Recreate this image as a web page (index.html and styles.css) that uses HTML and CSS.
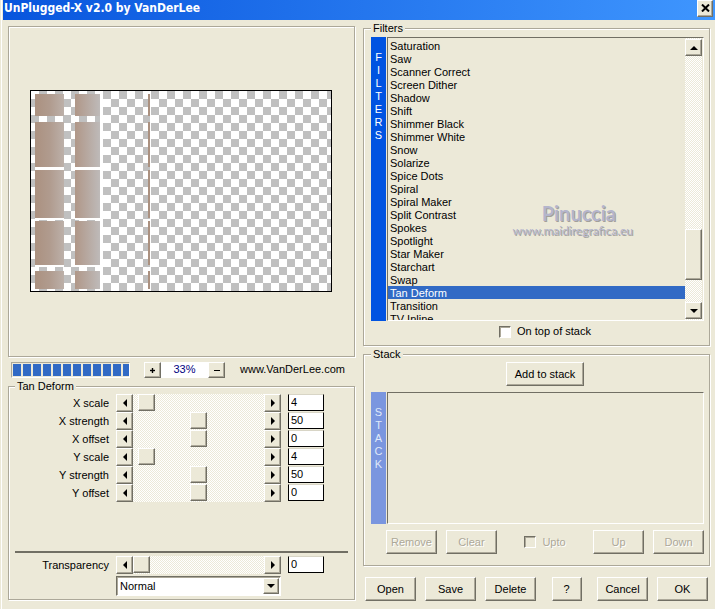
FILE: index.html
```html
<!DOCTYPE html>
<html lang="en">
<head>
  <meta charset="UTF-8">
  <title>UnPlugged-X v2.0 by VanDerLee</title>
  <link rel="stylesheet" href="styles.css">
</head>
<body>

<header class="titlebar">
  <h1>UnPlugged-X v2.0 by VanDerLee</h1>
  <button class="btn close" aria-label="Close">
    <svg width="9" height="8" viewBox="0 0 9 8"><path d="M1 0.5 L8 7.5 M8 0.5 L1 7.5" stroke="#000" stroke-width="2"/></svg>
  </button>
</header>

<main>
  <div class="col">
    <section class="panel preview">
      <svg class="canvas" width="302" height="202" viewBox="-1 -1 302 202" role="img" aria-label="Preview">
        <defs>
          <pattern id="checker" width="16" height="16" patternUnits="userSpaceOnUse">
            <rect width="16" height="16" fill="#fff"/>
            <path d="M8 0h8v8h-8z M0 8h8v8h-8z" fill="#c0c0c0"/>
          </pattern>
          <linearGradient id="dark"><stop offset="0" stop-color="#ab9180"/><stop offset="0.5" stop-color="#b09b8e"/><stop offset="1" stop-color="#bcb0a9"/></linearGradient>
          <linearGradient id="light"><stop offset="0" stop-color="#b09788"/><stop offset="1" stop-color="#bebab9"/></linearGradient>
        </defs>
        <rect width="300" height="200" fill="url(#checker)"/>
        <path d="M69 3h3v195h-3z M119 3h1v195h-1z M4 76h29v3h-29z M44 76h25v3h-25z M4 127h29v2h-29z M44 127h25v2h-25z M4 174h29v2h-29z M44 174h25v2h-25z" fill="#fff"/>
        <path d="M4 3h29v22H4z M4 31h29v45H4z M4 79h29v48H4z M4 130h29v44H4z M4 180h29v18H4z" fill="url(#dark)"/>
        <path d="M44 3h25v22H44z M44 31h25v45H44z M44 79h25v48H44z M44 130h25v44H44z M44 180h25v18H44z" fill="url(#light)"/>
        <path d="M117 3h2v22h-2z M117 31h2v45h-2z M117 79h2v48h-2z M117 130h2v44h-2z M117 180h2v18h-2z" fill="#ab9180"/>
        <rect x="-0.5" y="-0.5" width="301" height="201" fill="none" stroke="#000"/>
      </svg>
    </section>

    <div class="toolbar">
      <div class="progress" role="progressbar" aria-label="Rendering" aria-valuenow="100"></div>
      <div class="zoom">
        <button class="btn small" aria-label="Zoom in"><svg width="5" height="5"><path d="M0 2h5v1h-5z M2 0h1v5h-1z" stroke="#000" stroke-width="0.4"/></svg></button>
        <output>33%</output>
        <button class="btn small" aria-label="Zoom out"><svg width="6" height="5"><path d="M0 2h6v1h-6z"/></svg></button>
      </div>
      <a href="#">www.VanDerLee.com</a>
    </div>

    <fieldset class="group params">
      <legend>Tan Deform</legend>
      <div class="row">
        <label for="xscale">X scale</label>
        <div class="scroller">
          <button class="btn small" aria-label="Less"><i class="arrow left"></i></button>
          <input type="range" min="0" max="100" value="4" aria-label="X scale">
          <button class="btn small" aria-label="More"><i class="arrow right"></i></button>
        </div>
        <input type="text" id="xscale" value="4">
      </div>
      <div class="row">
        <label for="xstrength">X strength</label>
        <div class="scroller">
          <button class="btn small" aria-label="Less"><i class="arrow left"></i></button>
          <input type="range" min="0" max="100" value="50" aria-label="X strength">
          <button class="btn small" aria-label="More"><i class="arrow right"></i></button>
        </div>
        <input type="text" id="xstrength" value="50">
      </div>
      <div class="row">
        <label for="xoffset">X offset</label>
        <div class="scroller">
          <button class="btn small" aria-label="Less"><i class="arrow left"></i></button>
          <input type="range" min="-100" max="100" value="0" aria-label="X offset">
          <button class="btn small" aria-label="More"><i class="arrow right"></i></button>
        </div>
        <input type="text" id="xoffset" value="0">
      </div>
      <div class="row">
        <label for="yscale">Y scale</label>
        <div class="scroller">
          <button class="btn small" aria-label="Less"><i class="arrow left"></i></button>
          <input type="range" min="0" max="100" value="4" aria-label="Y scale">
          <button class="btn small" aria-label="More"><i class="arrow right"></i></button>
        </div>
        <input type="text" id="yscale" value="4">
      </div>
      <div class="row">
        <label for="ystrength">Y strength</label>
        <div class="scroller">
          <button class="btn small" aria-label="Less"><i class="arrow left"></i></button>
          <input type="range" min="0" max="100" value="50" aria-label="Y strength">
          <button class="btn small" aria-label="More"><i class="arrow right"></i></button>
        </div>
        <input type="text" id="ystrength" value="50">
      </div>
      <div class="row">
        <label for="yoffset">Y offset</label>
        <div class="scroller">
          <button class="btn small" aria-label="Less"><i class="arrow left"></i></button>
          <input type="range" min="-100" max="100" value="0" aria-label="Y offset">
          <button class="btn small" aria-label="More"><i class="arrow right"></i></button>
        </div>
        <input type="text" id="yoffset" value="0">
      </div>
      <hr>
      <div class="row">
        <label for="transparency">Transparency</label>
        <div class="scroller">
          <button class="btn small" aria-label="Less"><i class="arrow left"></i></button>
          <input type="range" min="0" max="100" value="0" aria-label="Transparency">
          <button class="btn small" aria-label="More"><i class="arrow right"></i></button>
        </div>
        <input type="text" id="transparency" value="0">
      </div>
      <div class="row">
        <div class="combo">
          <select aria-label="Blend mode">
            <option>Normal</option>
          </select>
          <span class="btn drop"><i class="arrow down"></i></span>
        </div>
      </div>
    </fieldset>
  </div>

  <div class="col">
    <fieldset class="group filters">
      <legend>Filters</legend>
      <div class="listrow">
        <div class="vbar"><span>F</span><span>I</span><span>L</span><span>T</span><span>E</span><span>R</span><span>S</span></div>
        <div class="listbox">
          <ul role="listbox" aria-label="Filters">
            <li role="option">Saturation</li>
            <li role="option">Saw</li>
            <li role="option">Scanner Correct</li>
            <li role="option">Screen Dither</li>
            <li role="option">Shadow</li>
            <li role="option">Shift</li>
            <li role="option">Shimmer Black</li>
            <li role="option">Shimmer White</li>
            <li role="option">Snow</li>
            <li role="option">Solarize</li>
            <li role="option">Spice Dots</li>
            <li role="option">Spiral</li>
            <li role="option">Spiral Maker</li>
            <li role="option">Split Contrast</li>
            <li role="option">Spokes</li>
            <li role="option">Spotlight</li>
            <li role="option">Star Maker</li>
            <li role="option">Starchart</li>
            <li role="option">Swap</li>
            <li role="option" aria-selected="true" class="selected">Tan Deform</li>
            <li role="option">Transition</li>
            <li role="option">TV Inline</li>
          </ul>
          <div class="scrollbar">
            <button class="btn" aria-label="Scroll up"><i class="arrow up"></i></button>
            <div class="thumb btn"></div>
            <button class="btn" aria-label="Scroll down"><i class="arrow down"></i></button>
          </div>
          <div class="watermark">
            <b>Pinuccia</b>
            <span>www.maidiregrafica.eu</span>
          </div>
        </div>
      </div>
      <label class="check"><input type="checkbox">On top of stack</label>
    </fieldset>

    <fieldset class="group stack">
      <legend>Stack</legend>
      <div class="addrow">
        <button class="btn add">Add to stack</button>
      </div>
      <div class="listrow">
        <div class="vbar"><span>S</span><span>T</span><span>A</span><span>C</span><span>K</span></div>
        <div class="listbox"><ul role="listbox" aria-label="Stack"></ul></div>
      </div>
      <div class="actions">
        <div class="buttons">
          <button class="btn" disabled>Remove</button>
          <button class="btn" disabled>Clear</button>
        </div>
        <label class="check disabled"><input type="checkbox" disabled>Upto</label>
        <div class="buttons">
          <button class="btn" disabled>Up</button>
          <button class="btn" disabled>Down</button>
        </div>
      </div>
    </fieldset>

    <footer class="actions">
      <div class="buttons">
        <button class="btn">Open</button>
        <button class="btn">Save</button>
        <button class="btn">Delete</button>
      </div>
      <button class="btn help">?</button>
      <div class="buttons">
        <button class="btn">Cancel</button>
        <button class="btn">OK</button>
      </div>
    </footer>
  </div>
</main>

</body>
</html>
```

FILE: styles.css
```css
* {
  box-sizing: border-box;
}
body {
  margin: 0;
  min-height: 100vh;
  background: #ece9d8;
  box-shadow: inset 1px 0 0 #ece9d8, inset 2px 0 0 #fff;
  color: #000;
  font: 11px/13px "Liberation Sans", Arial, sans-serif;
}
button, input, select {
  font: inherit;
  color: inherit;
  margin: 0;
  padding: 0;
  border-radius: 0;
}

/* title bar */
.titlebar {
  display: flex;
  align-items: flex-start;
  justify-content: space-between;
  height: 20px;
  margin-left: 3px;
  padding: 0 2px 0 1px;
  background: linear-gradient(90deg, #0855dd, #3f96fe);
}
.titlebar h1 {
  margin: 0;
  color: #fff;
  font: bold 12px/16px "DejaVu Sans Condensed", Tahoma, sans-serif;
}
.btn {
  display: flex;
  align-items: center;
  justify-content: center;
  background: #ece9d8;
  border: 1px solid;
  border-color: #fff #716f64 #716f64 #fff;
  box-shadow: inset -1px -1px 0 #aca899;
}
.btn.close {
  width: 16px;
  height: 17px;
  padding-bottom: 2px;
}
.btn.small {
  width: 17px;
  height: 100%;
  flex: none;
}

/* arrows */
.arrow {
  border: 4px solid transparent;
}
.arrow.left {
  border-left-width: 0;
  border-right-color: #000;
}
.arrow.right {
  border-right-width: 0;
  border-left-color: #000;
}
.arrow.up {
  border-top-width: 0;
  border-bottom-color: #000;
}
.arrow.down {
  border-bottom-width: 0;
  border-top-color: #000;
}

main {
  display: grid;
  grid-template-columns: 1fr 1fr;
  gap: 8px;
  padding: 2px 5px 6px 8px;
}

/* etched frames */
.panel, .group {
  min-width: 0;
  margin: 0;
  border: 1px solid #aca899;
  box-shadow: 1px 1px 0 #fff, inset 1px 1px 0 #fff;
}
legend {
  padding: 0 2px;
  background: #ece9d8;
}
.preview {
  height: 331px;
  margin-top: 4px;
  padding: 63px 21px;
}
.canvas {
  display: block;
}

.toolbar {
  display: flex;
  height: 16px;
  margin: 5px 0 2px 3px;
}
.toolbar a {
  color: #000;
  text-decoration: none;
  line-height: 15px;
}
.progress {
  width: 119px;
  margin-right: 14px;
  border: 1px solid;
  border-color: #aca899 #fff #fff #aca899;
  padding: 1px 0 1px 1px;
  background: repeating-linear-gradient(90deg, #316ac5 0 8px, #ece9d8 8px 10px) content-box;
}
.zoom {
  display: flex;
  width: 81px;
  margin-right: 15px;
}
.zoom output {
  flex: 1;
  background: #fff;
  color: #000080;
  text-align: center;
  line-height: 15px;
}

/* parameters */
.params {
  padding: 1px 6px 7px;
}
.row {
  display: grid;
  grid-template-columns: 94px 165px 36px;
  column-gap: 7px;
  height: 17px;
  margin-bottom: 1px;
}
.row label {
  text-align: right;
  line-height: 18px;
}
.scroller, .scrollbar {
  display: flex;
  background: conic-gradient(#fff 25%, #ece9d8 0 50%, #fff 0 75%, #ece9d8 0) 0 0 / 2px 2px;
}
input[type="range"] {
  flex: 1;
  min-width: 0;
  height: 17px;
  appearance: none;
  background: none;
}
input[type="range"]::-webkit-slider-thumb {
  appearance: none;
  width: 17px;
  height: 17px;
  background: #ece9d8;
  border: 1px solid;
  border-color: #fff #716f64 #716f64 #fff;
  box-shadow: inset -1px -1px 0 #aca899;
}
input[type="text"] {
  width: 36px;
  height: 17px;
  padding: 0 0 2px 2px;
  background: #fff;
  border: 1px solid #000;
  border-top-color: #d8d5c6;
}
.params hr {
  height: 2px;
  margin: 50px 0 3px;
  border: 0;
  background: #716f64;
}
.combo {
  grid-column: 2;
  position: relative;
  height: 20px;
  margin-top: 2px;
}
.combo select {
  width: 100%;
  height: 20px;
  padding-left: 3px;
  appearance: none;
  background: #fff;
  border: 1px solid;
  border-color: #716f64 #fff #fff #716f64;
  box-shadow: inset 1px 1px 0 #aca899;
}
.drop {
  position: absolute;
  top: 2px;
  right: 2px;
  bottom: 2px;
  width: 16px;
  pointer-events: none;
}

/* lists */
.filters {
  padding: 2px 5px 7px 7px;
}
.listrow {
  display: flex;
  height: 284px;
}
.vbar {
  display: flex;
  flex-direction: column;
  align-items: center;
  width: 15px;
  padding-top: 14px;
  background: #0053e1;
  color: #fff;
}
.listbox {
  position: relative;
  display: flex;
  flex: 1;
  margin-left: 1px;
  border: 1px solid;
  border-color: #716f64 #fff #fff #716f64;
}
.listbox ul {
  flex: 1;
  margin: 0;
  padding: 1px 0 0;
  list-style: none;
  overflow: hidden;
}
.listbox li {
  padding: 2px 0 0 2px;
  line-height: 11px;
}
.listbox .selected {
  background: #316ac5;
  color: #fff;
}
.scrollbar {
  flex-direction: column;
  justify-content: space-between;
  width: 17px;
  margin-right: 1px;
  padding: 1px 0;
}
.scrollbar button {
  height: 17px;
}
.scrollbar .thumb {
  height: 51px;
  margin: auto 0 22px;
}
.watermark {
  position: absolute;
  top: 164px;
  right: 70px;
  text-align: right;
  color: #b4b5cc;
  text-shadow: 1px 1px 0 #a3a09a;
  font-family: Lato, sans-serif;
}
.watermark b {
  display: block;
  padding-right: 17px;
  font-size: 20px;
  line-height: 22px;
}
.watermark span {
  font-size: 12px;
  line-height: 14px;
}

.check {
  display: flex;
  align-items: center;
  justify-content: center;
  gap: 6px;
}
.filters .check {
  padding: 4px 0 0 15px;
}
.check input {
  width: 12px;
  height: 12px;
  appearance: none;
  background: #fff;
  border: 1px solid;
  border-color: #716f64 #fff #fff #716f64;
  box-shadow: inset 1px 1px 0 #aca899;
}
.check.disabled input {
  background: #ece9d8;
}
.disabled, .btn:disabled {
  color: #aca899;
  text-shadow: 1px 1px 0 #fff;
}

.stack {
  margin-top: 2px;
  padding: 1px 5px 11px 7px;
}
.stack .listrow {
  height: 132px;
}
.stack .vbar {
  background: #7a96df;
  color: #dfe8fa;
}
.addrow {
  display: flex;
  justify-content: center;
  padding: 0 0 6px 15px;
}
.btn.add {
  width: 78px;
  height: 24px;
}
.actions {
  display: flex;
  justify-content: space-between;
}
.stack .actions {
  padding: 6px 0 0 15px;
}
footer.actions {
  padding: 11px 2px 0;
}
.buttons {
  display: flex;
  gap: 9px;
}
.actions .btn {
  width: 51px;
  height: 24px;
}
.actions .help {
  width: 30px;
}
```
